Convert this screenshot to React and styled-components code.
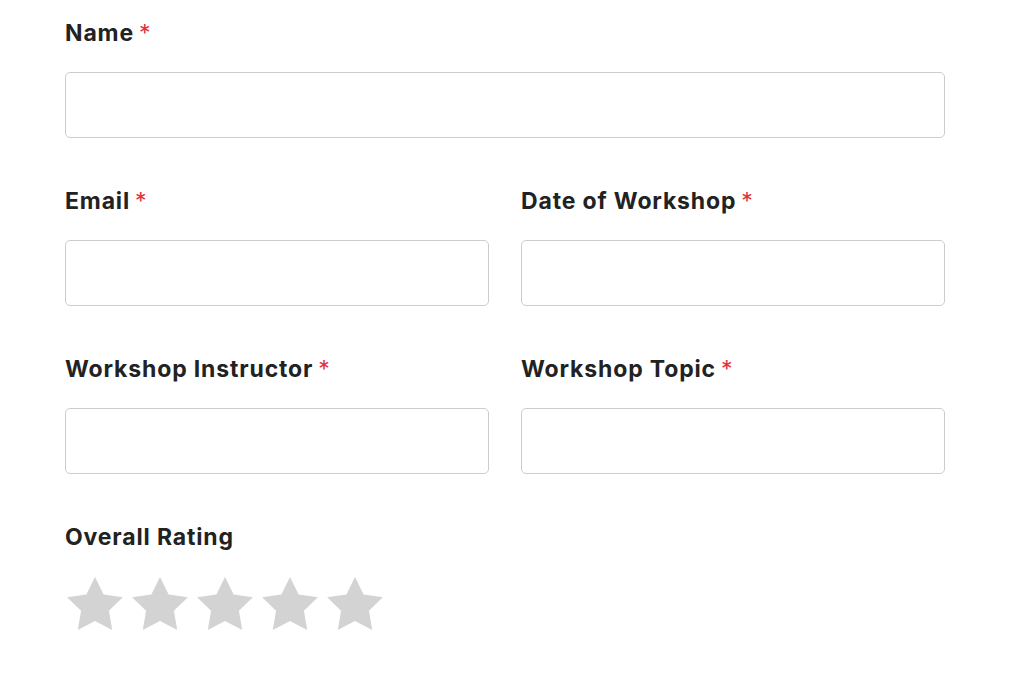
import React from "react";
import styled, { createGlobalStyle } from "styled-components";

const Global = createGlobalStyle`
  html, body { margin: 0; padding: 0; background: #ffffff; }
  body { font-family: Inter, "Noto Sans", sans-serif; color: #222222; }
  * { box-sizing: border-box; }
`;

const Form = styled.form`
  width: 880px;
  margin-left: 65px;
  padding-top: 18px;
  display: flex;
  flex-direction: column;
  gap: 48px;
`;

const Row = styled.div`
  display: grid;
  grid-template-columns: ${(p) => (p.$cols === 2 ? "1fr 1fr" : "1fr")};
  column-gap: 32px;
`;

const Field = styled.div`
  display: flex;
  flex-direction: column;
`;

const Label = styled.label`
  font-size: 23px;
  line-height: 30px;
  font-weight: 700;
  letter-spacing: 0.85px;
  color: #222222;
  margin-bottom: 24px;
`;

const Req = styled.span`
  color: #e0323a;
  font-weight: 400;
  margin-left: 5px;
`;

const Input = styled.input`
  height: 66px;
  width: 100%;
  border: 1.5px solid #cccccc;
  border-radius: 5px;
  background: #fff;
  font: inherit;
  padding: 0 14px;
  outline: none;
`;

const Stars = styled.div`
  display: flex;
  gap: 9px;
  margin-top: 1px;
  margin-left: 2px;
`;

const Star = () => (
  <svg width="56" height="53" viewBox="2 2 20 19.02">
    <polygon
      fill="#d3d3d3"
      points="12,2 15.09,8.26 22,9.27 17,14.14 18.18,21.02 12,17.77 5.82,21.02 7,14.14 2,9.27 8.91,8.26"
    />
  </svg>
);

const TextField = ({ label, required = true }) => (
  <Field>
    <Label>
      {label}
      {required && <Req>*</Req>}
    </Label>
    <Input type="text" />
  </Field>
);

export default function App() {
  return (
    <>
      <Global />
      <Form>
        <Row $cols={1}>
          <TextField label="Name" />
        </Row>
        <Row $cols={2}>
          <TextField label="Email" />
          <TextField label="Date of Workshop" />
        </Row>
        <Row $cols={2}>
          <TextField label="Workshop Instructor" />
          <TextField label="Workshop Topic" />
        </Row>
        <Field>
          <Label>Overall Rating</Label>
          <Stars>
            {[0, 1, 2, 3, 4].map((i) => (
              <Star key={i} />
            ))}
          </Stars>
        </Field>
      </Form>
    </>
  );
}
